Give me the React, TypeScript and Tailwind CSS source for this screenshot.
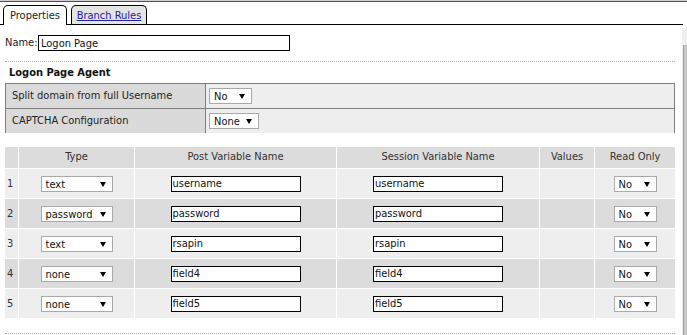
import React from "react";

const FONT = "font-['DejaVu_Sans_Condensed','DejaVu_Sans',sans-serif] font-stretch-condensed";

function Tri() {
  return (
    <svg width="6" height="5" viewBox="0 0 6 5" className="mt-[4px] shrink-0">
      <path d="M0 0H6L3 5Z" fill="#000" />
    </svg>
  );
}

function Sel({ label, className }: { label: string; className: string }) {
  return (
    <div className={`flex h-4 items-start justify-between border border-[#a9a9a9] bg-white pl-[4px] pr-[6px] pt-px text-[11px] leading-[13px] text-[#111] ${className}`}>
      <span>{label}</span>
      <Tri />
    </div>
  );
}

function TextBox({ value, className }: { value: string; className: string }) {
  return (
    <input
      readOnly
      value={value}
      className={`h-4 border border-black bg-white px-px text-[11px] leading-[14px] text-[#111] outline-none ${className}`}
    />
  );
}

const rows = [
  { n: "1", type: "text", post: "username", sess: "username" },
  { n: "2", type: "password", post: "password", sess: "password" },
  { n: "3", type: "text", post: "rsapin", sess: "rsapin" },
  { n: "4", type: "none", post: "field4", sess: "field4" },
  { n: "5", type: "none", post: "field5", sess: "field5" },
];

export default function App() {
  return (
    <div className={`relative h-[335px] w-[687px] overflow-hidden bg-white text-[11px] text-[#222] ${FONT}`}>
      <div className="h-px w-full bg-[#cfcfcf]" />
      <div className="h-px w-full bg-[#505050]" />
      {/* tab bar */}
      <div className="flex h-[23px] w-[683px] items-end gap-[4px] border-b border-black pl-[3px] pt-[3px]">
        <div className="-mb-px flex h-[20px] w-[64px] justify-center rounded-t-[5px] border border-b-0 border-black bg-white pt-[3px] leading-[14px] text-[#222]">
          Properties
        </div>
        <div className="flex h-[19px] w-[76px] justify-center rounded-t-[5px] border border-b-0 border-black bg-[#e4e4e4] pt-[3px] leading-[14px] text-[#22229a] underline">
          Branch Rules
        </div>
      </div>
      <div className="flex">
        {/* content */}
        <div className="w-[682px] pl-[5px]">
          <div className="w-[670px]">
            <div className="mt-[10px] flex h-4 items-center">
              <span className="w-[33px] leading-[14px]">Name:</span>
              <TextBox value="Logon Page" className="w-[252px] pl-[2px]" />
            </div>
            <div className="mt-[10px] h-px border-t border-dotted border-[#aaaaaa]" />
            <div className="mt-[4px] pl-[4px] font-bold leading-[14px] text-[#111]">Logon Page Agent</div>
            {/* table 1 */}
            <div className="mt-[3px] border-l border-r border-t border-[#7f7f7f]">
              <div className="flex h-[25px] border-b border-[#7f7f7f]">
                <div className="flex w-[200px] items-center border-r border-[#7f7f7f] bg-[#dadada] pl-[6px] leading-[14px]">
                  Split domain from full Username
                </div>
                <div className="flex flex-1 items-center bg-[#eeeeee] pl-[3px]">
                  <Sel label="No" className="w-[43px]" />
                </div>
              </div>
              <div className="flex h-[24px]">
                <div className="flex w-[200px] items-center border-r border-[#7f7f7f] bg-[#dadada] pl-[6px] leading-[14px]">
                  CAPTCHA Configuration
                </div>
                <div className="flex flex-1 items-center bg-[#eeeeee] pl-[3px]">
                  <Sel label="None" className="w-[50px]" />
                </div>
              </div>
            </div>
            {/* table 2 */}
            <div className="mt-[14px] grid grid-cols-[13px_115px_201px_202px_54px_80px] gap-px text-[#333]">
              <div className="h-[21px] bg-[#dcdcdc]" />
              <div className="flex h-[21px] items-center justify-center bg-[#dcdcdc]">Type</div>
              <div className="flex h-[21px] items-center justify-center bg-[#dcdcdc]">Post Variable Name</div>
              <div className="flex h-[21px] items-center justify-center bg-[#dcdcdc]">Session Variable Name</div>
              <div className="flex h-[21px] items-center justify-center bg-[#dcdcdc]">Values</div>
              <div className="flex h-[21px] items-center justify-center bg-[#dcdcdc]">Read Only</div>
              {rows.map((r, i) => {
                const bg = i % 2 === 0 ? "bg-[#eeeeee]" : "bg-[#dcdcdc]";
                return (
                  <React.Fragment key={r.n}>
                    <div className={`flex h-[29px] items-center pl-[2px] pt-px ${bg}`}>{r.n}</div>
                    <div className={`flex h-[29px] items-center justify-center ${bg}`}>
                      <Sel label={r.type} className="w-[72px]" />
                    </div>
                    <div className={`flex h-[29px] items-center justify-center ${bg}`}>
                      <TextBox value={r.post} className="w-[130px]" />
                    </div>
                    <div className={`flex h-[29px] items-center justify-center ${bg}`}>
                      <TextBox value={r.sess} className="w-[130px]" />
                    </div>
                    <div className={`h-[29px] ${bg}`} />
                    <div className={`flex h-[29px] items-center justify-center ${bg}`}>
                      <Sel label="No" className="w-[43px]" />
                    </div>
                  </React.Fragment>
                );
              })}
            </div>
            <div className="mt-[15px] h-px border-t border-dotted border-[#aaaaaa]" />
          </div>
        </div>
        {/* scrollbar */}
        <div className="mt-[3px] flex h-[320px] w-[5px] flex-col bg-[#efefef]">
          <div className="h-[17px]" />
          <div className="ml-px flex-1 border-l border-[#a0a0a0] bg-[#c6c6c6]" />
        </div>
      </div>
    </div>
  );
}
